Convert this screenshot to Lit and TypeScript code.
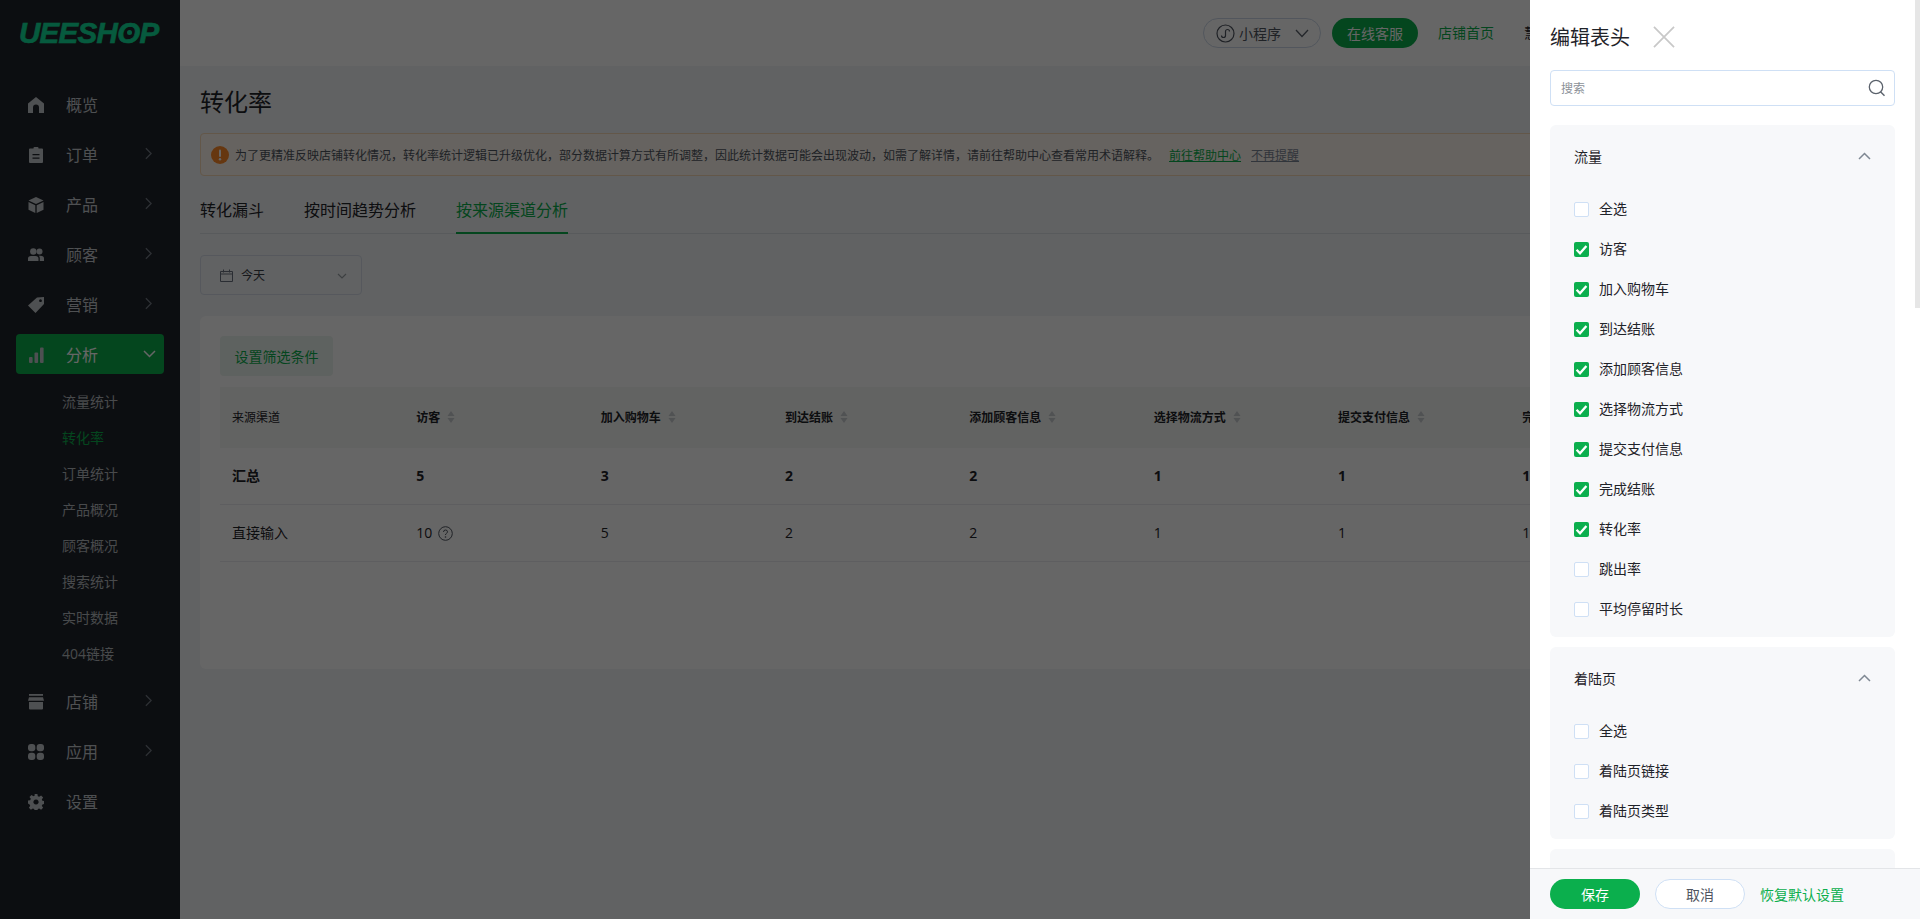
import { LitElement, html, css, svg } from "lit";
import { customElement } from "lit/decorators.js";

const chevRight = html`<svg class="nav-arrow" viewBox="0 0 8 14"><path d="M1 1l6 6-6 6" fill="none" stroke="currentColor" stroke-width="1.4"/></svg>`;

const navIcons: Record<string, any> = {
  home: svg`<path d="M8 0L0 6.6V16h5v-5.5a3 3 0 0 1 6 0V16h5V6.6z" fill="currentColor"/>`,
  order: svg`<path d="M5.5 1.5V1q0-1 1-1h3q1 0 1 1v.5H14q1 0 1 1V15q0 1-1 1H2q-1 0-1-1V2.500q0-1 1-1zM4.500 7v1.300h7V7zm0 3.500v1.300h7v-1.300z" fill="currentColor" fill-rule="evenodd"/>`,
  box: svg`<path d="M8 0l7.500 3.500L8 7 .5 3.500zM.5 5l6.800 3.200V16L.5 12.700zM15.500 5v7.700L8.700 16V8.200z" fill="currentColor"/>`,
  user: svg`<circle cx="5.300" cy="4.500" r="3.200" fill="currentColor"/><circle cx="11.500" cy="4.500" r="3" fill="currentColor"/><path d="M0 14v-2.500Q0 9 3 9h4.500q3 0 3 2.500V14zM11.800 14v-3q0-1.500-1-2.300h1.700q3.500 0 3.500 2.800V14z" fill="currentColor"/>`,
  tag: svg`<path d="M9 0.500L16 0v7l-8.500 9L0 8.500zM12.500 2.300a1.400 1.400 0 1 0 .01 0z" fill="currentColor" fill-rule="evenodd"/>`,
  chart: svg`<rect x="1" y="10" width="3.600" height="6" rx="1" fill="currentColor"/><rect x="6.500" y="5.500" width="3.600" height="10.500" rx="1" fill="currentColor"/><rect x="12" y="0.500" width="3.600" height="15.500" rx="1" fill="currentColor"/>`,
  store: svg`<rect x="1" y="0" width="14" height="1.800" fill="currentColor"/><path d="M1 3.200h14l1 3.500H0zM1 8h14v6.500q0 1-1 1H2q-1 0-1-1z" fill="currentColor"/>`,
  apps: svg`<rect x="0" y="0" width="7.300" height="7.300" rx="3" fill="currentColor"/><rect x="8.700" y="0" width="7.300" height="7.300" rx="3" fill="currentColor"/><rect x="0" y="8.700" width="7.300" height="7.300" rx="3" fill="currentColor"/><rect x="8.700" y="8.700" width="7.300" height="7.300" rx="3" fill="currentColor"/>`,
  gear: svg`<path d="M6.600 0h2.800l.4 2.200 1.400.6 1.900-1.300 2 2-1.300 1.900.6 1.400 2.200.4v2.800l-2.200.4-.6 1.400 1.300 1.900-2 2-1.900-1.300-1.400.6-.4 2.200H6.600l-.4-2.200-1.400-.6-1.900 1.300-2-2 1.300-1.900-.6-1.400L0 9.400V6.600l2.200-.4.6-1.400-1.300-1.900 2-2 1.900 1.300 1.400-.6zM8 5.400a2.600 2.600 0 1 0 .01 0z" fill="currentColor" fill-rule="evenodd"/>`,
};

const navTop = [
  ["概览", "home", false],
  ["订单", "order", true],
  ["产品", "box", true],
  ["顾客", "user", true],
  ["营销", "tag", true],
] as const;
const subs = ["流量统计", "转化率", "订单统计", "产品概况", "顾客概况", "搜索统计", "实时数据", "404链接"];
const navBottom = [
  ["店铺", "store", true],
  ["应用", "apps", true],
  ["设置", "gear", false],
] as const;

const cols = ["访客", "加入购物车", "到达结账", "添加顾客信息", "选择物流方式", "提交支付信息", "完成结账"];
const totals = ["5", "3", "2", "2", "1", "1", "1"];
const direct = ["10", "5", "2", "2", "1", "1", "1"];

const traffic: [string, boolean][] = [
  ["全选", false], ["访客", true], ["加入购物车", true], ["到达结账", true], ["添加顾客信息", true],
  ["选择物流方式", true], ["提交支付信息", true], ["完成结账", true], ["转化率", true], ["跳出率", false], ["平均停留时长", false],
];
const landing: [string, boolean][] = [["全选", false], ["着陆页链接", false], ["着陆页类型", false]];

@customElement("app-root")
export class AppRoot extends LitElement {
  static styles = css`
    :host { display: block; position: relative; width: 1920px; height: 919px; overflow: hidden; background: #f3f5f7; color: #1f2329;
      font-family: "Open Sans", "Noto Sans CJK SC", sans-serif; }
    * { box-sizing: border-box; }
    .page { display: flex; width: 1920px; height: 919px; }
    .side { width: 180px; flex: none; background: #20252c; display: flex; flex-direction: column; align-items: stretch; }
    .logo { height: 80px; padding: 13px 0 0 19px; font: italic 700 29.500px/40px "Liberation Sans", sans-serif; letter-spacing: -0.700px; color: #11e09b; -webkit-text-stroke: 0.600px #11e09b; position: relative; }
    .logo-dot { position: absolute; left: 127px; top: 30px; width: 5px; height: 5px; border-radius: 50%; background: #11e09b; }
    .nav { display: flex; flex-direction: column; padding: 4px 16px 0; }
    .nav-item { height: 40px; margin-bottom: 10px; display: flex; align-items: center; padding-left: 12px; border-radius: 4px; color: #c4c7cc; font-size: 16px; position: relative; }
    .nav-item.on { background: #0baf4d; color: #fff; margin-bottom: 0; }
    .nav-icon { width: 16px; height: 16px; margin: 2px 22px 0 0; flex: none; color: #c4c7cc; }
    .nav-arrow { position: absolute; left: 129px; top: 13px; width: 7px; height: 13px; color: #737a85; }
    .nav-item.on .nav-arrow { left: 127px; top: 16px; width: 13px; height: 8px; color: #fff; }
    .subs { display: flex; flex-direction: column; padding: 10px 0 9px 46px; }
    .sub { height: 36px; line-height: 36px; font-size: 14px; color: #b4b8bd; }
    .sub.on { color: #0baf4d; }

    .main { flex: 1; min-width: 0; display: flex; flex-direction: column; }
    .top { height: 66px; background: #fff; display: flex; align-items: flex-start; padding: 18px 0 0 1023px; white-space: nowrap; flex: none; }
    .mini { width: 118px; height: 30px; border: 1px solid #cdd8e8; border-radius: 15px; display: flex; align-items: center; padding-left: 12px; font-size: 14px; color: #4f5560; }
    .mini svg.a { width: 19px; height: 19px; margin-right: 4px; }
    .mini svg.b { width: 14px; height: 9px; margin-left: 14px; }
    .svc { width: 86px; height: 30px; margin-left: 11px; border-radius: 15px; background: #0baf4d; color: #fff; font-size: 14px; display: flex; align-items: center; justify-content: center; }
    .lnk { margin-left: 20px; font-size: 14px; line-height: 30px; color: #0baf4d; }
    .lnk.dark { margin-left: 30px; color: #1f2329; }

    .content { padding: 0 20px; flex: 1; }
    h1 { margin: 0; font-size: 24px; font-weight: 400; height: 67px; line-height: 72px; }
    .alert { height: 43px; border: 1px solid #f8d9b6; background: #fff8ef; border-radius: 4px; display: flex; align-items: center; padding-left: 10px; font-size: 12px; color: #4f5560; white-space: nowrap; }
    .alert svg { width: 18px; height: 18px; margin-right: 6px; flex: none; }
    .alert a { text-decoration: underline; margin-left: 10px; color: #7b8494; }
    .alert a.g { margin-left: 10px; color: #0baf4d; }
    .tabs { height: 58px; display: flex; gap: 40px; border-bottom: 1px solid #dde1e6; font-size: 16px; }
    .tab { height: 58px; line-height: 68px; }
    .tab.on { color: #0baf4d; border-bottom: 2px solid #0baf4d; }
    .date { width: 162px; height: 40px; margin-top: 21px; border: 1px solid #d6dde8; border-radius: 4px; display: flex; align-items: center; padding-left: 19px; font-size: 12px; position: relative; color: #3a4048; }
    .date svg.c { width: 13px; height: 13px; margin-right: 8px; }
    .date svg.d { position: absolute; left: 136px; top: 17px; width: 10px; height: 6px; }
    .card { margin-top: 21px; height: 353px; background: #fff; border-radius: 6px; padding: 20px 20px 0; }
    .filter { width: 113px; height: 40px; background: #ecf4ef; color: #0baf4d; border-radius: 4px; font-size: 14px; display: flex; align-items: center; justify-content: center; }
    .row { display: grid; grid-template-columns: repeat(9, 184.330px); align-items: center; padding: 0 0 2px 12px; white-space: nowrap; }
    .thead { margin-top: 11px; height: 61px; background: #f5f7f4; font-size: 12px; font-weight: 700; }
    .thead .first { font-weight: 400; }
    .thead .cell { display: flex; align-items: center; }
    .sort { width: 8px; height: 12px; margin-left: 7px; color: #c8ccd0; }
    .tbody { height: 57px; border-bottom: 1px solid #eaecef; font-size: 14px; }
    .tbody.sum { font-weight: 700; }
    .q { width: 15px; height: 15px; margin-left: 6px; vertical-align: -3px; }

    .mask { position: absolute; inset: 0; background: rgba(0, 0, 0, 0.6); }
    .drawer { position: absolute; left: 1530px; top: 0; width: 390px; height: 919px; background: #fff; display: flex; flex-direction: column; overflow: hidden; }
    .thumb { position: absolute; right: 0; top: 0; width: 5px; height: 308px; background: #e6e6e6; }
    .d-body { flex: 1; min-height: 0; overflow: hidden; padding: 0 25px 0 20px; }
    .d-head { height: 70px; display: flex; align-items: center; padding-top: 3px; font-size: 20px; }
    .d-head svg { width: 22px; height: 22px; margin-left: 23px; }
    .search { height: 36px; border: 1px solid #cfe0f5; border-radius: 4px; display: flex; align-items: center; justify-content: space-between; padding: 0 8px 0 10px; font-size: 12px; color: #8c9198; }
    .search svg { width: 18px; height: 18px; }
    .group { background: #f7f8fa; border-radius: 6px; padding: 0 24px; margin-bottom: 10px; }
    .group.g1 { margin-top: 19px; height: 512px; }
    .group.g2 { height: 192px; }
    .group.g3 { height: 60px; }
    .g-title { height: 62px; display: flex; align-items: center; justify-content: space-between; font-size: 14px; }
    .g-title svg { width: 13px; height: 8px; color: #7f8893; }
    .opts { padding-top: 2px; }
    .opt { height: 40px; display: flex; align-items: center; font-size: 14px; }
    .opt .lab { padding-bottom: 2px; }
    .box { width: 15px; height: 15px; border: 1px solid #cfe0f5; background: #fff; border-radius: 2px; margin: 1px 10px 0 0; flex: none; display: block; }
    .box.on { border: 0; background: #0baf4d; }
    .box svg { display: block; width: 15px; height: 15px; }
    .foot { height: 51px; flex: none; background: #f7f8fa; border-top: 1px solid #e3e5e8; display: flex; align-items: center; padding-left: 20px; font-size: 14px; }
    .save { width: 90px; height: 30px; border-radius: 15px; background: #0baf4d; color: #fff; display: flex; align-items: center; justify-content: center; }
    .cancel { width: 90px; height: 30px; border-radius: 15px; margin-left: 15px; background: #fff; border: 1px solid #cfe0f5; color: #4f5560; display: flex; align-items: center; justify-content: center; }
    .reset { margin-left: 15px; color: #0baf4d; }
  `;

  private navItem(label: string, icon: string, arrow: boolean, on = false) {
    return html`<div class="nav-item ${on ? "on" : ""}">
      <svg class="nav-icon" viewBox="0 0 16 16">${navIcons[icon]}</svg>${label}${arrow && !on ? chevRight : ""}
      ${on ? html`<svg class="nav-arrow" viewBox="0 0 13 8"><path d="M1 1l5.500 5.500L12 1" fill="none" stroke="currentColor" stroke-width="1.500"/></svg>` : ""}
    </div>`;
  }

  private options(list: [string, boolean][]) {
    return html`<div class="opts">${list.map(([t, c]) => html`<div class="opt">
      ${c
        ? html`<span class="box on"><svg viewBox="0 0 15 15"><path d="M2.600 7.800l3.400 3.500 6.400-7.300" fill="none" stroke="#fff" stroke-width="2.300"/></svg></span>`
        : html`<span class="box"></span>`}<span class="lab">${t}</span></div>`)}</div>`;
  }

  private sort() {
    return html`<svg class="sort" viewBox="0 0 8 12"><path d="M4 0l3.500 5h-7zM4 12L.5 7h7z" fill="currentColor"/></svg>`;
  }

  render() {
    const up = html`<svg viewBox="0 0 13 8"><path d="M1 7l5.500-5.500L12 7" fill="none" stroke="currentColor" stroke-width="1.500"/></svg>`;
    return html`
      <div class="page">
        <aside class="side">
          <div class="logo">UEESHOP<span class="logo-dot"></span></div>
          <nav class="nav">
            ${navTop.map(([l, i, a]) => this.navItem(l, i, a))}
            ${this.navItem("分析", "chart", true, true)}
            <div class="subs">${subs.map((s, i) => html`<div class="sub ${i === 1 ? "on" : ""}">${s}</div>`)}</div>
            ${navBottom.map(([l, i, a]) => this.navItem(l, i, a))}
          </nav>
        </aside>
        <main class="main">
          <header class="top">
            <div class="mini">
              <svg class="a" viewBox="0 0 19 19"><circle cx="9.500" cy="9.500" r="8.500" fill="none" stroke="#4f5560" stroke-width="1.200"/><path d="M5.500 11.500a2 2 0 0 0 4 0V7.500a2 2 0 0 1 4 0" fill="none" stroke="#4f5560" stroke-width="1.200"/></svg>
              小程序
              <svg class="b" viewBox="0 0 14 9"><path d="M1 1l6 6.500L13 1" fill="none" stroke="#5b626c" stroke-width="1.300"/></svg>
            </div>
            <div class="svc">在线客服</div>
            <div class="lnk">店铺首页</div>
            <div class="lnk dark">慧</div>
          </header>
          <div class="content">
            <h1>转化率</h1>
            <div class="alert">
              <svg viewBox="0 0 18 18"><circle cx="9" cy="9" r="9" fill="#ff8a2a"/><rect x="8" y="3.500" width="2" height="7.500" rx="1" fill="#fff"/><circle cx="9" cy="13.300" r="1.200" fill="#fff"/></svg>
              为了更精准反映店铺转化情况，转化率统计逻辑已升级优化，部分数据计算方式有所调整，因此统计数据可能会出现波动，如需了解详情，请前往帮助中心查看常用术语解释。
              <a class="g">前往帮助中心</a><a>不再提醒</a>
            </div>
            <div class="tabs">
              <div class="tab">转化漏斗</div>
              <div class="tab">按时间趋势分析</div>
              <div class="tab on">按来源渠道分析</div>
            </div>
            <div class="date">
              <svg class="c" viewBox="0 0 13 13"><path d="M.5 2.500h12v10H.5zM.5 5h12M3.500.5v3M9.500.5v3" fill="none" stroke="#6a7280" stroke-width="1"/></svg>
              今天
              <svg class="d" viewBox="0 0 10 6"><path d="M1 1l4 4 4-4" fill="none" stroke="#9aa0a6" stroke-width="1.200"/></svg>
            </div>
            <section class="card">
              <div class="filter">设置筛选条件</div>
              <div class="row thead">
                <div class="first">来源渠道</div>
                ${cols.map((c) => html`<div class="cell">${c}${this.sort()}</div>`)}
              </div>
              <div class="row tbody sum">
                <div>汇总</div>
                ${totals.map((t) => html`<div>${t}</div>`)}
              </div>
              <div class="row tbody">
                <div>直接输入</div>
                ${direct.map((t, i) => html`<div>${t}${i === 0
                  ? html`<svg class="q" viewBox="0 0 15 15"><circle cx="7.500" cy="7.500" r="6.800" fill="none" stroke="#4f5560"/><path d="M5.500 6q0-2 2-2t2 1.800q0 1-1 1.500T7.500 9" fill="none" stroke="#4f5560"/><circle cx="7.500" cy="11" r=".8" fill="#4f5560"/></svg>`
                  : ""}</div>`)}
              </div>
            </section>
          </div>
        </main>
      </div>
      <div class="mask"></div>
      <aside class="drawer">
        <div class="thumb"></div>
        <div class="d-body">
          <div class="d-head">编辑表头
            <svg viewBox="0 0 23 23"><path d="M1 1l21 21M22 1L1 22" fill="none" stroke="#c8c8c8" stroke-width="1.800"/></svg>
          </div>
          <div class="search">搜索
            <svg viewBox="0 0 18 18"><circle cx="8" cy="8" r="6.700" fill="none" stroke="#5b626c" stroke-width="1.300"/><path d="M12.500 12.800l4 4" fill="none" stroke="#5b626c" stroke-width="1.500"/></svg>
          </div>
          <div class="group g1"><div class="g-title">流量${up}</div>${this.options(traffic)}</div>
          <div class="group g2"><div class="g-title">着陆页${up}</div>${this.options(landing)}</div>
          <div class="group g3"></div>
        </div>
        <footer class="foot">
          <div class="save">保存</div><div class="cancel">取消</div><div class="reset">恢复默认设置</div>
        </footer>
      </aside>
    `;
  }
}
